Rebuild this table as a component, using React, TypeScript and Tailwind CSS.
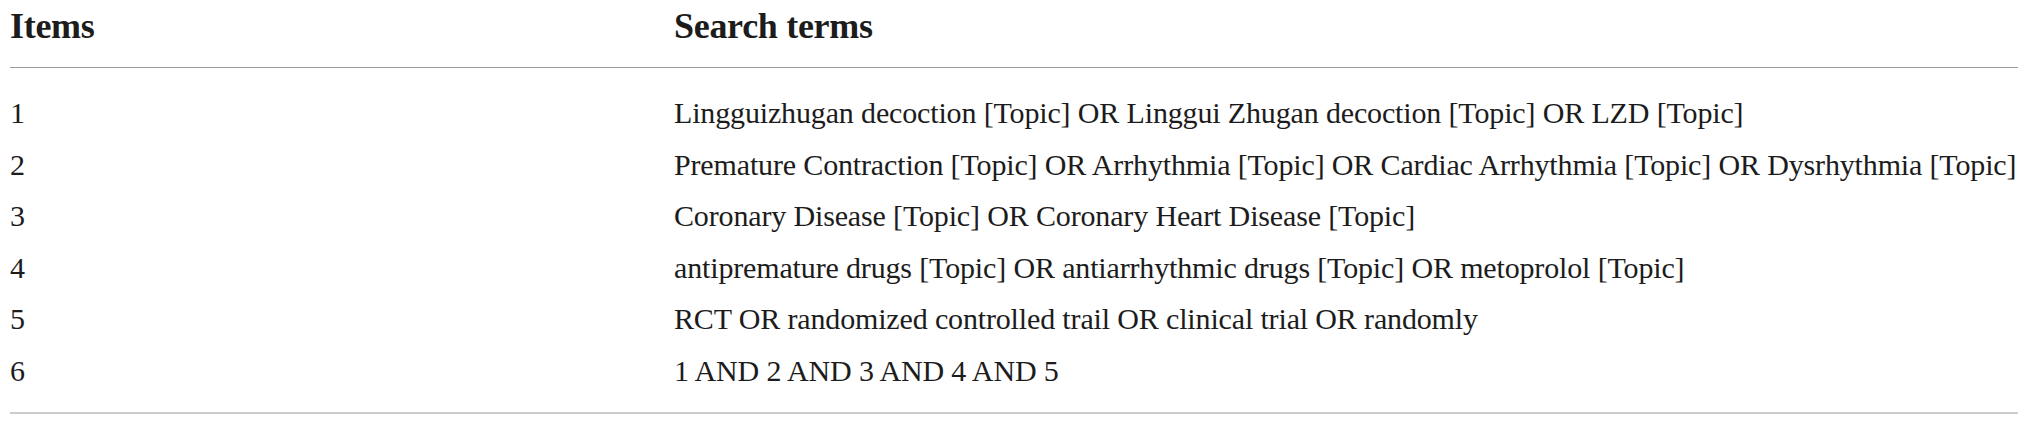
const rows = [
  ["1", "Lingguizhugan decoction [Topic] OR Linggui Zhugan decoction [Topic] OR LZD [Topic]"],
  ["2", "Premature Contraction [Topic] OR Arrhythmia [Topic] OR Cardiac Arrhythmia [Topic] OR Dysrhythmia [Topic]"],
  ["3", "Coronary Disease [Topic] OR Coronary Heart Disease [Topic]"],
  ["4", "antipremature drugs [Topic] OR antiarrhythmic drugs [Topic] OR metoprolol [Topic]"],
  ["5", "RCT OR randomized controlled trail OR clinical trial OR randomly"],
  ["6", "1 AND 2 AND 3 AND 4 AND 5"],
];

const App = () => {
  return (
    <div className="w-[2030px] h-[425px] bg-white text-[#1c1c1c] font-['Liberation_Serif',serif]">
      <div className="ml-[10px] w-[2008px]">
        <div className="flex h-[68px] items-start pt-[8px] border-b border-[#9c9c9c] font-bold text-[36px] leading-[36px] tracking-[-0.3px]">
          <span className="w-[664px]">Items</span>
          <span>Search terms</span>
        </div>
        <div className="pt-[19px] pb-[16px] border-b-2 border-[#cccccc]">
          {rows.map(([n, t]) => (
            <div key={n} className="flex h-[51.5px] items-center text-[30px] tracking-[-0.15px]">
              <span className="w-[664px]">{n}</span>
              <span>{t}</span>
            </div>
          ))}
        </div>
      </div>
    </div>
  );
};

export default App;
